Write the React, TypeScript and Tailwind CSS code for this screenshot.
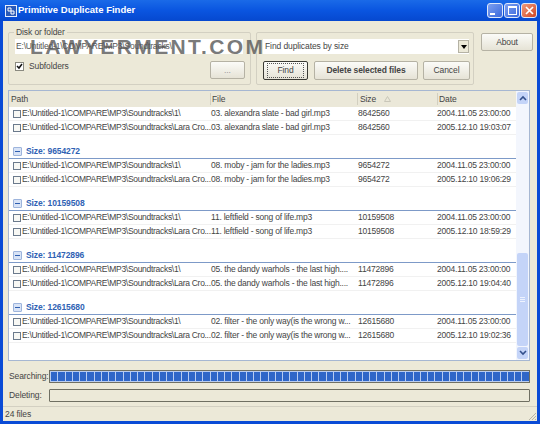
const PATH_A = "E:\\Untitled-1\\COMPARE\\MP3\\Soundtracks\\1\\"
const PATH_B = "E:\\Untitled-1\\COMPARE\\MP3\\Soundtracks\\Lara Cro..."

const GROUPS = [
  { size: "9654272", file: "08. moby - jam for the ladies.mp3", date: "2005.12.10 19:06:29" },
  { size: "10159508", file: "11. leftfield - song of life.mp3", date: "2005.12.10 18:59:29" },
  { size: "11472896", file: "05. the dandy warhols - the last high....", date: "2005.12.10 19:04:40" },
  { size: "12615680", file: "02. filter - the only way(is the wrong w...", date: "2005.12.10 19:02:36" },
]

const CHUNKS = Array.from({ length: 66 }, (_, i) => i)

function XpButton({ label, bold, focused, className }: { label: string; bold?: boolean; focused?: boolean; className: string }) {
  return (
    <div
      className={`flex shrink-0 items-center justify-center rounded-[2px] border bg-gradient-to-b from-[#fbfbf8] to-[#e6e3d6] text-[8.5px] tracking-[-0.1px] ${
        focused ? "border-[#3a3a34]" : "border-[#b5b2a4]"
      } ${bold ? "font-bold" : ""} ${className}`}
    >
      {focused ? <span className="border border-dotted border-[#555] px-[9px] leading-[13px]">{label}</span> : label}
    </div>
  )
}

function FileRow({ path, file, size, date }: { path: string; file: string; size: string; date: string }) {
  return (
    <div className="flex h-[14px] items-center border-b border-[#f1f1f1] text-[8.5px] leading-[13px] tracking-[-0.22px] text-[#444]">
      <div className="flex w-[201px] shrink-0 items-center pl-[4px]">
        <div className="mr-[1px] h-[8px] w-[8px] shrink-0 border border-[#6b7a8c] bg-[#f8f8f4]" />
        <span className="whitespace-nowrap tracking-[-0.3px]">{path}</span>
      </div>
      <div className="w-[147px] shrink-0 whitespace-nowrap pl-[1px]">{file}</div>
      <div className="w-[80px] shrink-0 pl-[1px]">{size}</div>
      <div className="whitespace-nowrap">{date}</div>
    </div>
  )
}

function SizeGroup({ size, file, date }: { size: string; file: string; date: string }) {
  return (
    <div>
      <div className="flex h-[24px] items-end">
        <div className="flex h-[15px] w-full items-center border-b border-[#7d9ac8] pl-[4px]">
          <div className="flex h-[9px] w-[9px] items-center justify-center rounded-[1px] border border-[#9db4dc] bg-[#d8e3f6]">
            <div className="h-px w-[5px] bg-[#2f5fb0]" />
          </div>
          <span className="ml-[4px] text-[8.5px] font-bold tracking-[-0.1px] text-[#2f62b4]">Size: {size}</span>
        </div>
      </div>
      <FileRow path={PATH_A} file={file} size={size} date="2004.11.05 23:00:00" />
      <FileRow path={PATH_B} file={file} size={size} date={date} />
    </div>
  )
}

function WinButton({ children, close }: { children: React.ReactNode; close?: boolean }) {
  return (
    <div
      className={`flex h-[15px] w-[16px] items-center justify-center rounded-[3px] border border-[#dfe8fa] ${
        close ? "bg-gradient-to-br from-[#ee9a7c] to-[#cf4420]" : "bg-gradient-to-br from-[#7d9ff0] to-[#3a68dc]"
      }`}
    >
      {children}
    </div>
  )
}

export default function App() {
  return (
    <div className="flex h-[424px] w-[540px] flex-col overflow-hidden bg-[#0a4bd6] font-['Liberation_Sans',sans-serif] text-[#444]">
      {/* Title bar */}
      <div className="flex h-[21px] shrink-0 items-center bg-gradient-to-b from-[#1a6ae8] via-[#0a55e0] to-[#0648cf] pl-[5px] pr-[3px]">
        <svg width="12" height="12" viewBox="0 0 12 12" className="shrink-0">
          <rect x="0.5" y="0.5" width="11" height="11" fill="#2a5ab8" stroke="#e8eefc" />
          <path d="M3 3h3v3H3zM6 6h3v3H6z" fill="none" stroke="#ffffff" />
        </svg>
        <span className="ml-[1px] text-[9.5px] font-bold text-white">Primitive Duplicate Finder</span>
        <div className="ml-auto flex gap-[1px]">
          <WinButton>
            <div className="mt-[7px] mr-[5px] h-[2px] w-[5px] bg-white" />
          </WinButton>
          <WinButton>
            <div className="h-[9px] w-[9px] border border-t-2 border-white" />
          </WinButton>
          <WinButton close>
            <svg width="9" height="9" viewBox="0 0 9 9">
              <path d="M1 1l7 7M8 1l-7 7" stroke="#fff" strokeWidth="1.7" />
            </svg>
          </WinButton>
        </div>
      </div>

      {/* Client area */}
      <div className="relative mx-[3px] flex min-h-0 flex-1 flex-col bg-[#ece9d8]">
        <div className="flex items-start pl-[5px] pt-[11px]">
          <div className="relative h-[53px] w-[243px] rounded-[2px] border border-[#d3d0c2] px-[6px] pt-[6px]">
            <span className="absolute -top-[6px] left-[5px] bg-[#ece9d8] px-[2px] text-[8.5px] leading-[10px] tracking-[-0.1px]">Disk or folder</span>
            <div className="flex h-[15px] w-[228px] items-center bg-white pl-[1px] text-[8.5px] tracking-[-0.2px] text-[#555]">
              E:\Untitled-1\COMPARE\MP3\Soundtracks\
            </div>
            <div className="mt-[7px] flex items-start justify-between">
              <div className="flex items-center">
                <div className="flex h-[9px] w-[9px] items-center justify-center border border-[#8a8a80] bg-white">
                  <svg width="7" height="7" viewBox="0 0 7 7">
                    <path d="M1 3l2 2 3-4" fill="none" stroke="#111" strokeWidth="1.5" />
                  </svg>
                </div>
                <span className="ml-[5px] text-[8.5px] leading-[10px] tracking-[-0.1px]">Subfolders</span>
              </div>
              <XpButton label="..." className="-mr-[1px] h-[18px] w-[35px] text-[#999]" />
            </div>
          </div>

          <div className="relative ml-[5px] h-[53px] w-[218px] rounded-[2px] border border-[#d3d0c2] px-[6px] pt-[6px]">
            <div className="flex h-[15px] w-[206px] items-center justify-between bg-white pl-[2px] text-[8.5px] tracking-[-0.1px] text-[#444]">
              Find duplicates by size
              <div className="flex h-[13px] w-[11px] items-center justify-center border border-[#b5b2a4] bg-[#ece9d8]">
                <div className="h-0 w-0 border-x-[3px] border-t-[4px] border-x-transparent border-t-black" />
              </div>
            </div>
            <div className="mt-[7px] flex">
              <XpButton label="Find" focused className="h-[19px] w-[45px]" />
              <XpButton label="Delete selected files" bold className="ml-[6px] h-[19px] w-[104px]" />
              <XpButton label="Cancel" className="ml-[5px] h-[19px] w-[47px]" />
            </div>
          </div>

          <XpButton label="About" className="ml-[7px] mt-[1px] h-[18px] w-[52px]" />
        </div>

        {/* Results list */}
        <div className="ml-[5px] mt-[5px] flex h-[271px] w-[522px] border border-[#a6b7d2] bg-white">
          <div className="w-[508px] overflow-hidden">
            <div className="flex h-[16px] items-center bg-[#ebe8d9] text-[8.5px] tracking-[-0.1px] text-[#444]">
              <div className="w-[201px] shrink-0 pl-[2px]">Path</div>
              <div className="w-[147px] shrink-0 border-l border-[#d2cfc0] pl-[1px]">File</div>
              <div className="flex w-[80px] shrink-0 items-center border-l border-[#d2cfc0] pl-[2px]">
                Size
                <svg width="7" height="6" viewBox="0 0 7 6" className="ml-[8px]">
                  <path d="M3.5 0.5L6.5 5.5H0.5Z" fill="none" stroke="#c9c6b8" />
                </svg>
              </div>
              <div className="border-l border-[#d2cfc0] pl-[1px]">Date</div>
            </div>
            <FileRow path={PATH_A} file="03. alexandra slate - bad girl.mp3" size="8642560" date="2004.11.05 23:00:00" />
            <FileRow path={PATH_B} file="03. alexandra slate - bad girl.mp3" size="8642560" date="2005.12.10 19:03:07" />
            {GROUPS.map((g) => (
              <SizeGroup key={g.size} {...g} />
            ))}
          </div>

          {/* Scrollbar */}
          <div className="flex w-[13px] flex-col gap-px bg-[#f3f6fd] p-px">
            <div className="flex h-[12px] shrink-0 items-center justify-center rounded-[2px] bg-[#c4d4f8]">
              <svg width="8" height="6" viewBox="0 0 8 6">
                <path d="M1 5l3-3 3 3" fill="none" stroke="#33508c" strokeWidth="1.6" />
              </svg>
            </div>
            <div className="min-h-0 flex-1" />
            <div className="flex h-[93px] shrink-0 flex-col items-center justify-center gap-px rounded-[2px] bg-[#c4d4f8]">
              <div className="h-px w-[5px] bg-[#eef3fe]" />
              <div className="h-px w-[5px] bg-[#eef3fe]" />
              <div className="h-px w-[5px] bg-[#eef3fe]" />
            </div>
            <div className="flex h-[12px] shrink-0 items-center justify-center rounded-[2px] bg-[#c4d4f8]">
              <svg width="8" height="6" viewBox="0 0 8 6">
                <path d="M1 1l3 3 3-3" fill="none" stroke="#33508c" strokeWidth="1.6" />
              </svg>
            </div>
          </div>
        </div>

        {/* Progress */}
        <div className="mt-[9px] flex h-[13px] items-center pl-[6px]">
          <span className="w-[40px] text-[8.5px] tracking-[-0.1px]">Searching:</span>
          <div className="flex h-[13px] w-[481px] gap-px overflow-hidden border border-[#6f6f62] bg-[#b8ccf0] p-px">
            {CHUNKS.map((i) => (
              <div key={i} className="h-full flex-1 bg-[#2f66c8]" />
            ))}
          </div>
        </div>
        <div className="mt-[6px] flex h-[13px] items-center pl-[6px]">
          <span className="w-[40px] text-[8.5px] tracking-[-0.1px]">Deleting:</span>
          <div className="h-[13px] w-[481px] rounded-[1px] border border-[#6f6f62] bg-[#ece9d8]" />
        </div>

        {/* Status bar */}
        <div className="relative mt-auto flex h-[15px] items-center border-t border-[#d3d0c2] pl-[2px] text-[8.5px] tracking-[-0.1px]">
          24 files
          <svg width="10" height="10" viewBox="0 0 10 10" className="absolute bottom-0 right-0">
            <path d="M9 2L2 9M9 5L5 9M9 8L8 9" stroke="#b5b2a4" />
          </svg>
        </div>

        {/* Watermark */}
        <span className="absolute left-[27px] top-[10px] whitespace-nowrap text-[21px] font-bold tracking-[2.4px] text-[#555]/80">
          LAWYERMENT.COM
        </span>
      </div>
      <div className="h-[3px] shrink-0" />
    </div>
  )
}
